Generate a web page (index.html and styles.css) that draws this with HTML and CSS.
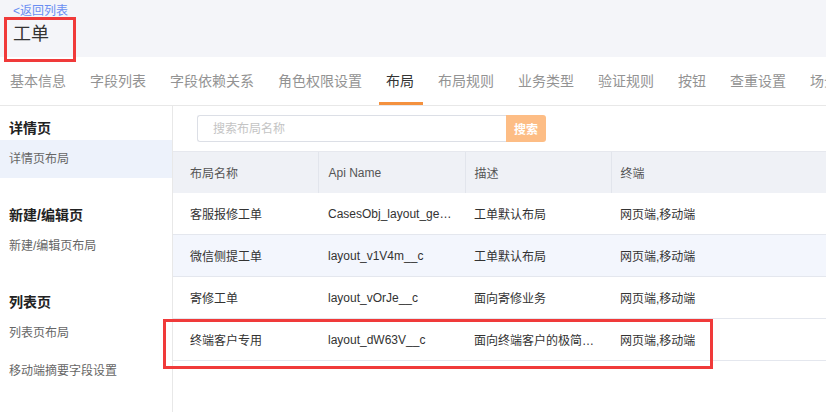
FILE: index.html
```html
<!DOCTYPE html>
<html lang="zh-CN">
<head>
  <meta charset="UTF-8" />
  <title>工单 - 布局</title>
  <link rel="stylesheet" href="styles.css">
</head>
<body>
  <div class="header">
    <a class="back" href="#">&lt;返回列表</a>
    <div class="title">工单</div>
    <div class="mark mark-title"></div>
  </div>

  <div class="tabs">
    <span class="tab">基本信息</span>
    <span class="tab">字段列表</span>
    <span class="tab">字段依赖关系</span>
    <span class="tab">角色权限设置</span>
    <span class="tab active">布局</span>
    <span class="tab">布局规则</span>
    <span class="tab">业务类型</span>
    <span class="tab">验证规则</span>
    <span class="tab">按钮</span>
    <span class="tab">查重设置</span>
    <span class="tab">场景设置</span>
  </div>

  <div class="body">
    <div class="sidebar">
      <div class="group">
        <div class="group-title">详情页</div>
        <div class="item selected">详情页布局</div>
      </div>
      <div class="group">
        <div class="group-title">新建/编辑页</div>
        <div class="item">新建/编辑页布局</div>
      </div>
      <div class="group">
        <div class="group-title">列表页</div>
        <div class="item">列表页布局</div>
        <div class="item">移动端摘要字段设置</div>
      </div>
    </div>

    <div class="main">
      <div class="search">
        <input class="search-input" type="text" placeholder="搜索布局名称">
        <button class="search-btn">搜索</button>
      </div>

      <div class="table-wrap">
        <table class="layouts">
          <colgroup>
            <col class="c1"><col class="c2"><col class="c3"><col>
          </colgroup>
          <thead>
            <tr><th>布局名称</th><th>Api Name</th><th>描述</th><th>终端</th></tr>
          </thead>
          <tbody>
            <tr><td>客服报修工单</td><td>CasesObj_layout_generate</td><td>工单默认布局</td><td>网页端,移动端</td></tr>
            <tr class="hover"><td>微信侧提工单</td><td>layout_v1V4m__c</td><td>工单默认布局</td><td>网页端,移动端</td></tr>
            <tr><td>寄修工单</td><td>layout_vOrJe__c</td><td>面向寄修业务</td><td>网页端,移动端</td></tr>
            <tr><td>终端客户专用</td><td>layout_dW63V__c</td><td>面向终端客户的极简版工单布局</td><td>网页端,移动端</td></tr>
          </tbody>
        </table>
        <div class="mark mark-row"></div>
      </div>
    </div>
  </div>
</body>
</html>
```

FILE: styles.css
```css
body {
  margin: 0;
  font-family: "Liberation Sans", "Noto Sans CJK SC", sans-serif;
  color: #333;
  background: #fff;
  overflow: hidden;
}

/* red annotation boxes */
.mark {
  position: absolute;
  border: 3px solid #f03a3a;
  pointer-events: none;
}
.mark-title {
  left: 4px;
  top: 17px;
  width: 66px;
  height: 39px;
}
.mark-row {
  left: -10px;
  top: 168px;
  width: 544px;
  height: 44px;
}

.header {
  position: relative;
  height: 57px;
  background: #f4f5f9;
  padding: 3px 13px 0;
  box-sizing: border-box;
}
.back {
  display: block;
  font-size: 12px;
  line-height: 16px;
  color: #6a8ef2;
  text-decoration: none;
  border-bottom: 1px solid #b9c9f5;
  width: max-content;
}
.title {
  margin-top: 2px;
  font-size: 18px;
  line-height: 24px;
  color: #333;
}

.tabs {
  display: flex;
  gap: 24px;
  height: 48px;
  padding-left: 10px;
  border-bottom: 1px solid #e8e8e8;
  white-space: nowrap;
  overflow: hidden;
}
.tab {
  position: relative;
  font-size: 14px;
  line-height: 48px;
  color: #939393;
}
.tab.active {
  color: #333;
}
.tab.active::after {
  content: "";
  position: absolute;
  left: -7px;
  right: -9px;
  bottom: 0;
  height: 3px;
  background: #f4913e;
}

.body {
  display: flex;
  height: 306px;
}

.sidebar {
  width: 172px;
  flex-shrink: 0;
  border-right: 1px solid #e8e8e8;
  padding-top: 12px;
}
.group + .group {
  margin-top: 27px;
}
.group-title {
  padding-left: 9px;
  font-size: 14px;
  font-weight: bold;
  line-height: 20px;
  color: #222;
  margin-bottom: 2px;
}
.item {
  padding-left: 9px;
  font-size: 12px;
  line-height: 38px;
  color: #666;
}
.item.selected {
  background: #edf2fb;
}

.main {
  flex: 1;
  min-width: 0;
  padding-top: 9px;
}
.search {
  display: flex;
  margin-left: 24px;
  width: 349px;
  height: 27px;
}
.search-input {
  flex: 1;
  min-width: 0;
  border: 1px solid #dcdfe6;
  border-right: none;
  border-radius: 3px 0 0 3px;
  padding: 0 15px;
  font-family: inherit;
  font-size: 12px;
  color: #333;
  outline: none;
}
.search-input::placeholder {
  color: #c4c4c4;
}
.search-btn {
  width: 40px;
  border: none;
  border-radius: 0 3px 3px 0;
  background: #fdbd85;
  color: #fff;
  font-family: inherit;
  font-size: 12px;
  font-weight: bold;
  padding: 0;
}

.table-wrap {
  position: relative;
  margin-top: 9px;
}
.layouts {
  width: 100%;
  table-layout: fixed;
  border-collapse: collapse;
  font-size: 12px;
}
.layouts .c1 { width: 145px; }
.layouts .c2 { width: 147px; }
.layouts .c3 { width: 146px; }
.layouts th {
  height: 41px;
  padding: 0 16px 0 9px;
  text-align: left;
  font-weight: normal;
  color: #555;
  background: #eff1f6;
  border-top: 1px solid #e6e8ee;
  border-left: 1px solid #e2e5ec;
}
.layouts td {
  height: 41px;
  padding: 0 16px 0 9px;
  border-bottom: 1px solid #e4e7ee;
  white-space: nowrap;
  overflow: hidden;
  text-overflow: ellipsis;
  color: #333;
}
.layouts th:first-child,
.layouts td:first-child {
  padding-left: 17px;
  border-left: none;
}
.layouts tr.hover td {
  background: #f3f6fd;
}
.layouts tbody tr td:nth-child(2) {
  padding-left: 10px;
  padding-right: 10px;
}
.layouts thead th:nth-child(2) {
  padding-left: 10px;
}
```
